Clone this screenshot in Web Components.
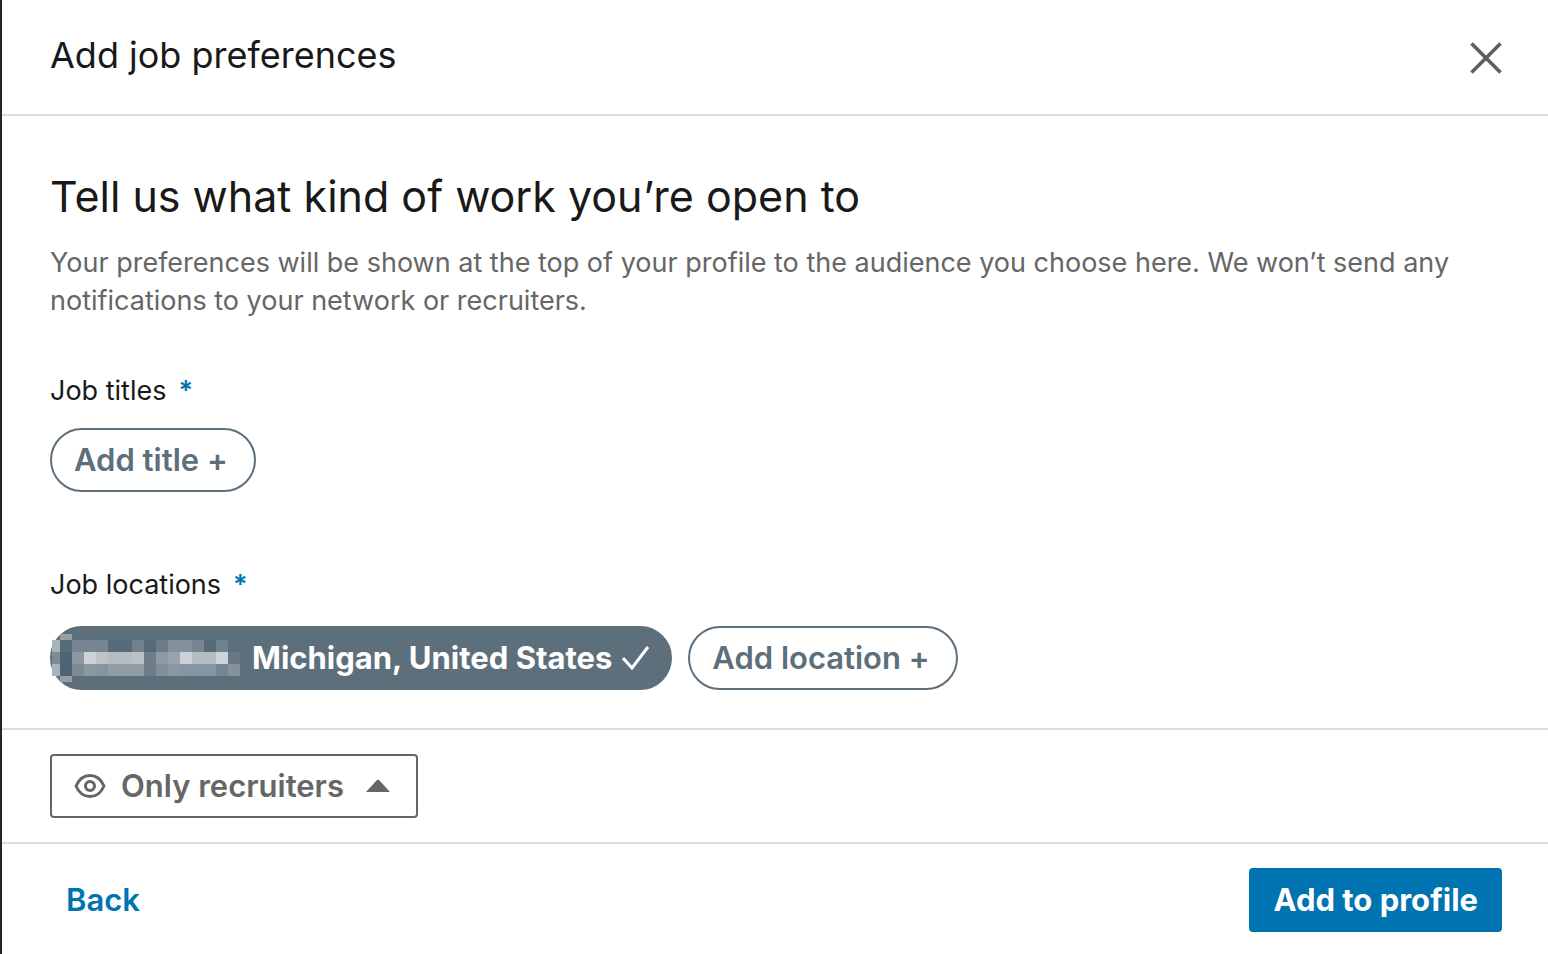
<!DOCTYPE html>
<html lang="en">
<head>
<meta charset="utf-8">
<meta name="viewport" content="width=device-width, initial-scale=1">
<title>Add job preferences</title>
<style>
  body {
    margin: 0;
    background: #fff;
    color: #191919;
    font: 27px/38px Inter, "Liberation Sans", sans-serif;
  }
</style>
</head>
<body>
<preferences-dialog>
  <span slot="title">Add job preferences</span>

  <intro-text>
    <span slot="heading">Tell us what kind of work you’re open to</span>
    Your preferences will be shown at the top of your profile to the audience you choose here. We won’t send any notifications to your network or recruiters.
  </intro-text>
  <pill-group label="Job titles">
    <pill-button>Add title +</pill-button>
  </pill-group>
  <pill-group label="Job locations">
    <pill-button selected><redacted-text></redacted-text> Michigan, United States</pill-button>
    <pill-button>Add location +</pill-button>
  </pill-group>

  <visibility-button slot="visibility">Only recruiters</visibility-button>

  <action-button slot="actions" kind="tertiary">Back</action-button>
  <action-button slot="actions" kind="primary">Add to profile</action-button>
</preferences-dialog>

<script>
class PreferencesDialog extends HTMLElement {
  connectedCallback() {
    this.attachShadow({mode: 'open'});
    this.shadowRoot.innerHTML = `
      <style>
        :host {
          display: flex;
          flex-direction: column;
          box-sizing: border-box;
          min-height: 100vh;
          border-left: 2px solid #222426;
        }

        header, .visibility, footer {
          display: flex;
          align-items: center;
          justify-content: space-between;
          padding: 24px 46px 24px 48px;
        }

        header {
          padding: 28px 40px 32px 48px;
          border-bottom: 2px solid #dcdcdc;
        }

        h1 { margin: 0; font-size: 36px; line-height: 54px; font-weight: 400; }

        .close {
          display: flex;
          padding: 10px 4px 4px;
          border: 0;
          background: none;
          color: #5e5e5e;
          cursor: pointer;
        }

        main { flex: 1; padding: 48px 48px 38px; }
        .visibility { border-top: 2px solid #dcdcdc; }
        footer { border-top: 2px solid #dcdcdc; padding-bottom: 22px; }
      </style>

      <header>
        <h1><slot name="title"></slot></h1>
        <button class="close" aria-label="Dismiss">
          <svg width="36" height="36" viewBox="0 0 36 36" fill="none" stroke="currentColor" stroke-width="3.600">
            <path d="M3.500 3.500l29 29M32.500 3.500l-29 29"/>
          </svg>
        </button>
      </header>
      <main><slot></slot></main>
      <div class="visibility"><slot name="visibility"></slot></div>
      <footer><slot name="actions"></slot></footer>
      `;

    this.shadowRoot.querySelector('.close').onclick = () =>
      this.dispatchEvent(new CustomEvent('dialog:close', {bubbles: true, composed: true}));
  }
}
customElements.define('preferences-dialog', PreferencesDialog);

class IntroText extends HTMLElement {
  connectedCallback() {
    this.attachShadow({mode: 'open'});
    this.shadowRoot.innerHTML = `
      <style>
        :host { display: block; }
        h2 { margin: 0 0 16px; font-size: 43px; line-height: 64px; font-weight: 400; }
        p { margin: 0; color: #666; }
      </style>

      <h2><slot name="heading"></slot></h2>
      <p><slot></slot></p>
      `;
  }
}
customElements.define('intro-text', IntroText);

class PillGroup extends HTMLElement {
  connectedCallback() {
    this.attachShadow({mode: 'open'});
    this.shadowRoot.innerHTML = `
      <style>
        :host { display: block; margin-top: 52px; }
        :host(:last-of-type) { margin-top: 74px; }
        #label { display: flex; gap: 12px; margin-bottom: 18px; }
        :host(:last-of-type) #label { margin-bottom: 22px; }
        .required { color: #0073b1; font-weight: 600; }
        .pills { display: flex; flex-wrap: wrap; gap: 16px; }
      </style>

      <div id="label"><span>${this.getAttribute('label')}</span><span class="required">*</span></div>
      <div class="pills" role="group" aria-labelledby="label"><slot></slot></div>
      `;
  }
}
customElements.define('pill-group', PillGroup);

class PillButton extends HTMLElement {
  connectedCallback() {
    const selected = this.hasAttribute('selected');
    this.attachShadow({mode: 'open'});
    this.shadowRoot.innerHTML = `
      <style>
        :host { display: block; }

        button {
          display: flex;
          align-items: center;
          gap: 10px;
          height: 64px;
          padding: 0 26px 0 22px;
          border: 2px solid #5e6f7c;
          border-radius: 32px;
          background: #fff;
          color: #5e6f7c;
          font: 600 31px/40px Inter, "Liberation Sans", sans-serif;
          white-space: nowrap;
          cursor: pointer;
        }

        button[aria-pressed="true"] { padding: 0 20px 0 0; background: #5e6f7c; color: #fff; font-weight: 700; }
        .label { display: flex; align-items: center; gap: 12px; }
      </style>

      <button aria-pressed="${selected}">
        <span class="label"><slot></slot></span>
        ${selected ? `
          <svg width="28" height="26" viewBox="0 0 28 26" fill="none" stroke="currentColor" stroke-width="3">
            <path d="M1 13l9 10L26 2"/>
          </svg>` : ''}
      </button>
      `;
  }
}
customElements.define('pill-button', PillButton);

// Mosaic that hides the city name
class RedactedText extends HTMLElement {
  connectedCallback() {
    const rows = [
      ['#a9b3ba', '#566b7a', '#778592', '#778592', '#778592', '#566b7a', '#566b7a', '#71808d', '#566b7a', '#6b7b88', '#84929c', '#84929c', '#778692', '#566b7a', '#71808d', '#5b6e7c'],
      ['#7d8a94', '#4f6374', '#8b98a2', '#ccd2d7', '#bcc4ca', '#b4bdc4', '#b4bdc4', '#bac2c8', '#6d7e8a', '#8e9aa4', '#98a4ad', '#ccd2d8', '#b4bdc4', '#b4bdc4', '#ccd4da', '#677986'],
      ['#a9b3ba', '#4f6374', '#7d8b96', '#8b98a1', '#8795a0', '#929da5', '#929da5', '#929da5', '#6d7e8a', '#81909b', '#8b98a1', '#8795a0', '#8795a0', '#8795a0', '#76858f', '#84929c'],
    ];
    const cells = rows.map((row, y) => row.map((fill, x) =>
      `<rect x="${x * 12 - 4}" y="${y * 12 + 8}" width="12" height="12" fill="${fill}"/>`).join('')).join('');

    this.attachShadow({mode: 'open'});
    this.shadowRoot.innerHTML = `
      <style>
        :host { display: block; }
        svg { display: block; }
      </style>
      <svg width="188" height="52" viewBox="0 0 188 52" shape-rendering="crispEdges" aria-hidden="true">
        <path d="M8 2h12v6H8zM8 44h12v6H8z" fill="#97a0a7"/>
        ${cells}
      </svg>
      `;
  }
}
customElements.define('redacted-text', RedactedText);

class VisibilityButton extends HTMLElement {
  connectedCallback() {
    this.attachShadow({mode: 'open'});
    this.shadowRoot.innerHTML = `
      <style>
        :host { display: block; }

        button {
          display: flex;
          align-items: center;
          height: 64px;
          padding: 0 26px 0 22px;
          border: 2px solid #666;
          border-radius: 4px;
          background: #fff;
          color: #666;
          font: 600 31px/40px Inter, "Liberation Sans", sans-serif;
          cursor: pointer;
        }

        .label { margin: 0 22px 0 15px; }
      </style>

      <button aria-haspopup="true">
        <svg width="32" height="26" viewBox="0 0 32 26" fill="none" stroke="currentColor">
          <path stroke-width="3" d="M2 13C5 6 10 2.500 16 2.500S27 6 30 13C27 20 22 23.500 16 23.500S5 20 2 13z"/>
          <circle cx="16" cy="13" r="4.500" stroke-width="3"/>
        </svg>
        <span class="label"><slot></slot></span>
        <svg width="24" height="14" viewBox="0 0 24 14" fill="currentColor"><path d="M0 13L10.500 1.500Q12 0 13.500 1.500L24 13z"/></svg>
      </button>
      `;
  }
}
customElements.define('visibility-button', VisibilityButton);

class ActionButton extends HTMLElement {
  connectedCallback() {
    this.attachShadow({mode: 'open'});
    this.shadowRoot.innerHTML = `
      <style>
        :host { display: block; }

        button {
          height: 64px;
          padding: 0 16px;
          border: 0;
          border-radius: 4px;
          background: none;
          color: #0073b1;
          font: 600 31px/40px Inter, "Liberation Sans", sans-serif;
          cursor: pointer;
        }

        :host([kind="primary"]) button { padding: 0 24px; background: #0073b1; color: #fff; font-weight: 700; }
      </style>

      <button><slot></slot></button>
      `;
  }
}
customElements.define('action-button', ActionButton);
</script>
</body>
</html>
